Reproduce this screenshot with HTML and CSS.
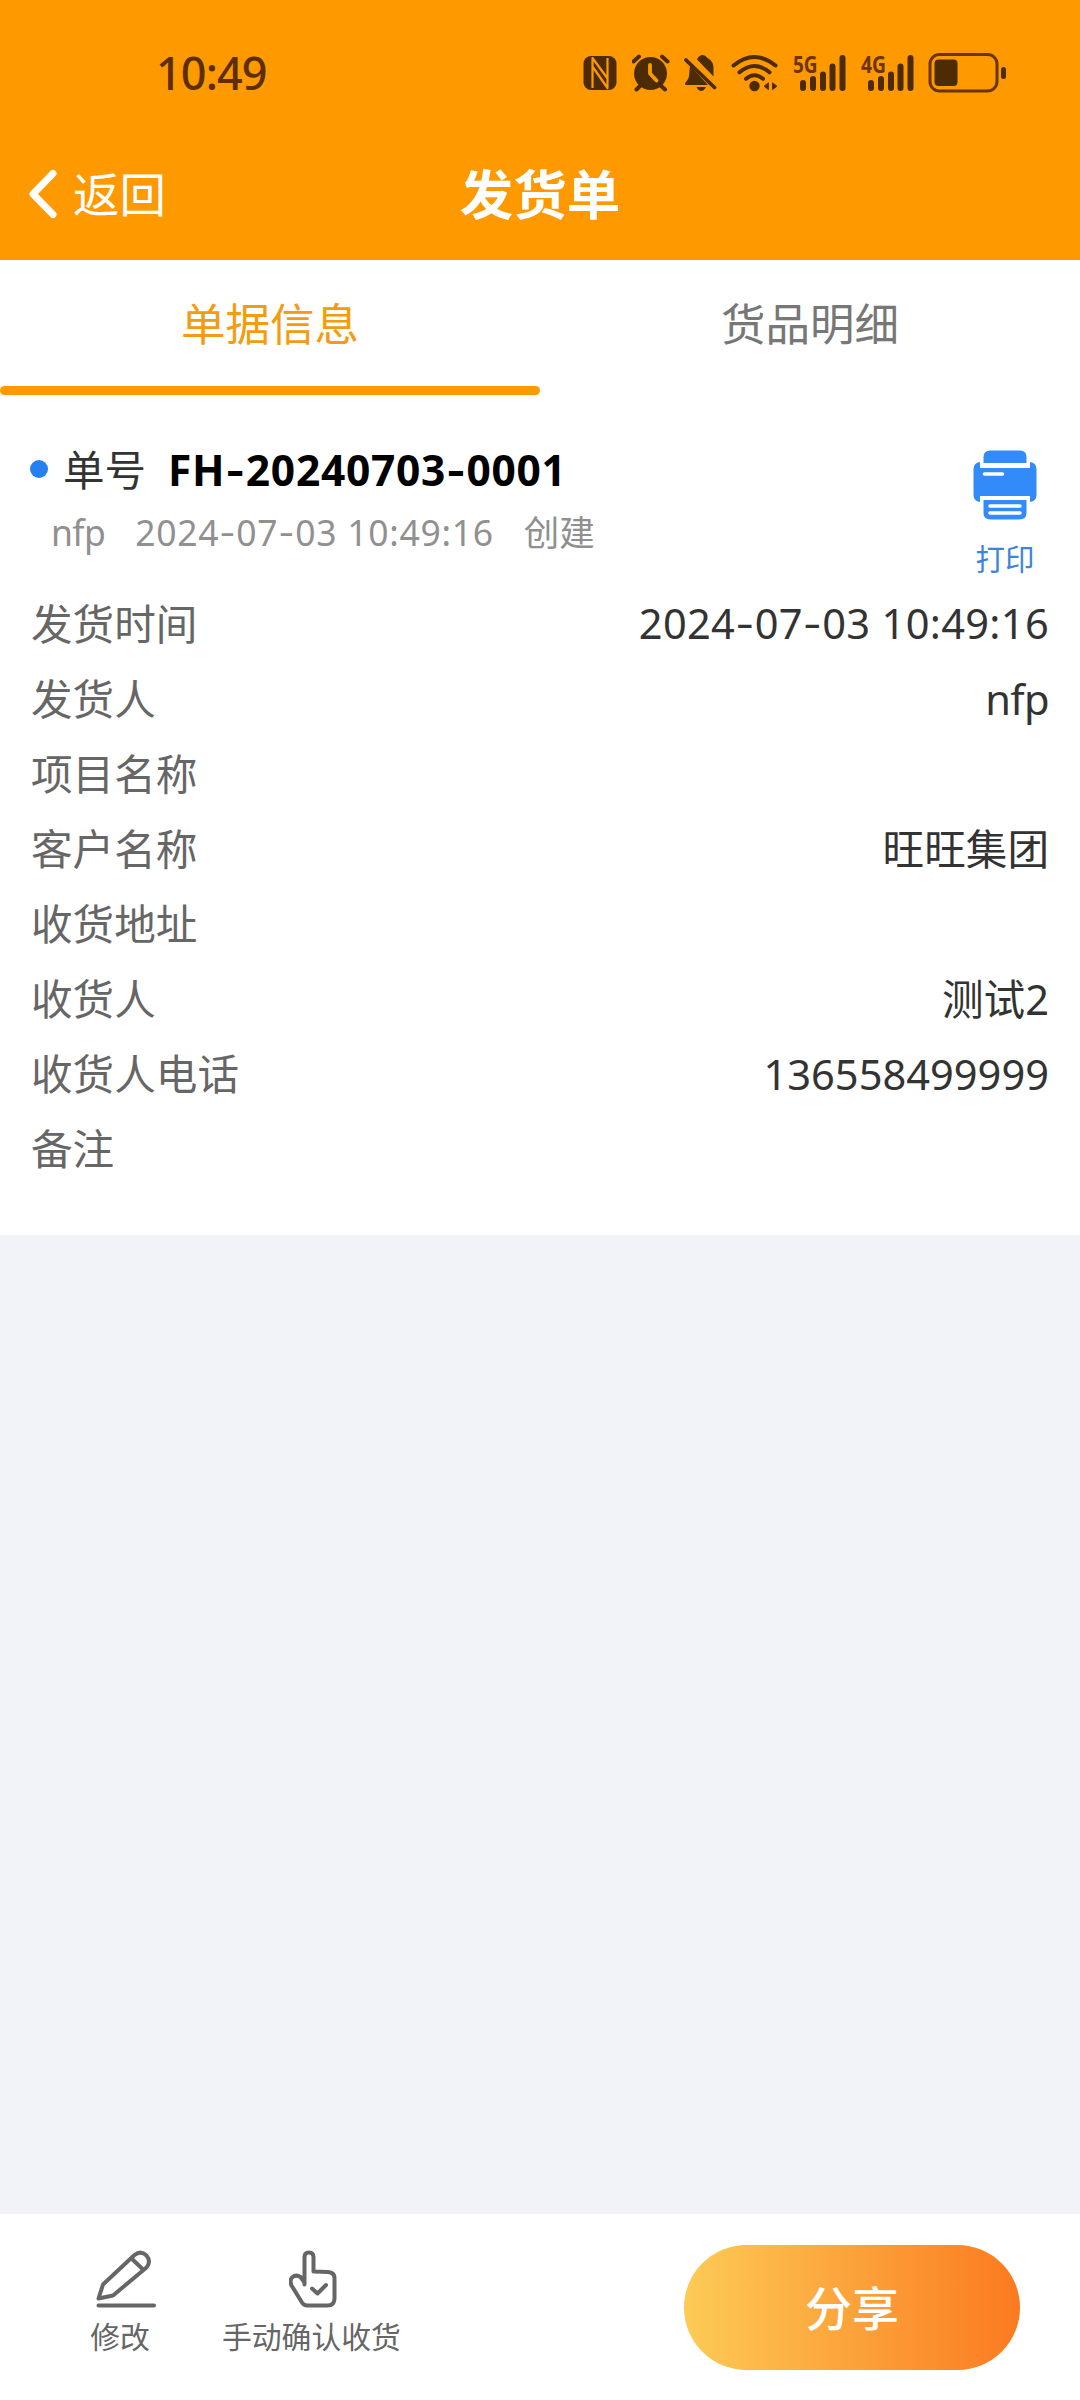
FILE: index.html
```html
<!DOCTYPE html>
<html lang="zh-CN">
<head>
<meta charset="utf-8">
<title>发货单</title>
<link rel="stylesheet" href="styles.css">
</head>
<body>
<div class="app">
  <header class="header">
    <div class="status">
      <span class="clock">10:49</span>
      <div class="status-icons">
        <svg class="nfc" width="34" height="36" viewBox="583 55 34 36">
          <rect x="583.5" y="56" width="33" height="34" rx="7.5" fill="#4d2c05"/>
          <path d="M592.500 88V58L607.500 78.500M592.500 66.500L607.500 88V58" fill="none" stroke="#ff9900" stroke-width="2.200" stroke-linejoin="round"/>
        </svg>
        <svg class="alarm" width="38" height="38" viewBox="632 54 38 38">
          <circle cx="650.5" cy="73.500" r="16.500" fill="#4d2c05"/>
          <path d="M633.500 61.500l5.500-5M662 56.500l5.500 5M641 85l-4.500 4.500M660 85l5 4.500" stroke="#4d2c05" stroke-width="4" stroke-linecap="round"/>
          <path d="M650 65v8.500l6.500 7" fill="none" stroke="#ff9900" stroke-width="3.800" stroke-linecap="round" stroke-linejoin="round"/>
        </svg>
        <svg class="bell" width="34" height="38" viewBox="684 54 34 38">
          <path d="M697 59.500q1.500-4 5-4.500 3-.4 5.500 3 6 3 6 10v8.500zM690 65.500L708 85H685.500q-1.500-1.500.5-3 2.500-2.500 3-6z" fill="#4d2c05"/>
          <path d="M686 60l28.500 27.500" stroke="#4d2c05" stroke-width="3.800" stroke-linecap="round"/>
          <path d="M696.500 87h9.500q-2 4-4.800 4t-4.700-4z" fill="#4d2c05"/>
        </svg>
        <svg class="wifi" width="48" height="38" viewBox="731 54 48 38">
          <path d="M733.500 65.500q21-17 42 0M739.500 72.300q15-12.500 30 0M746 78.800q8.500-7 17 0" fill="none" stroke="#4d2c05" stroke-width="4" stroke-linecap="round"/>
          <circle cx="754.500" cy="86" r="5.200" fill="#4d2c05"/>
          <path d="M764 86.200l4.500-3.500v7zM777 86.200l-4.500-3.500v7z" fill="#4d2c05" stroke="#4d2c05" stroke-width=".8"/>
        </svg>
        <svg class="signal" width="55" height="58" viewBox="792 44 55 58">
          <text class="net" x="793" y="72.500" textLength="24.500" lengthAdjust="spacingAndGlyphs">5G</text>
          <path d="M803 83v5M813 79v9M823 74.500V88M832.500 66.500V88M842.500 58V88" stroke="#4d2c05" stroke-width="6" stroke-linecap="round"/>
        </svg>
        <svg class="signal" width="55" height="58" viewBox="792 44 55 58">
          <text class="net" x="793" y="72.500" textLength="25" lengthAdjust="spacingAndGlyphs">4G</text>
          <path d="M803 83v5M813 79v9M823 74.500V88M832.500 66.500V88M842.500 58V88" stroke="#4d2c05" stroke-width="6" stroke-linecap="round"/>
        </svg>
        <svg class="battery" width="79" height="40" viewBox="928 53 79 40">
          <rect x="930" y="54.500" width="67" height="36.500" rx="9.500" fill="none" stroke="#6b3400" stroke-width="3"/>
          <rect x="934.500" y="59.500" width="23" height="26.500" rx="4" fill="#4d2c05"/>
          <rect x="1001" y="67" width="5" height="12" rx="2.500" fill="#4d2c05"/>
        </svg>
      </div>
    </div>
    <nav class="navbar">
      <a class="back">
        <svg width="28" height="50" viewBox="0 0 28 50"><path d="M24 4.500L4 25l20 20.500" fill="none" stroke="#fff" stroke-width="7" stroke-linecap="round" stroke-linejoin="round"/></svg>
        <span>返回</span>
      </a>
      <h1 class="title">发货单</h1>
    </nav>
  </header>

  <div class="tabs">
    <div class="tab active">单据信息</div>
    <div class="tab">货品明细</div>
  </div>

  <main class="card">
    <section class="order">
      <div class="order-main">
        <div class="order-no"><i class="dot"></i><span class="order-label">单号</span><b class="order-code">FH<span class="dash">-</span>20240703<span class="dash">-</span>0001</b></div>
        <div class="order-meta"><span class="who">nfp</span><span class="when">2024<span class="dash">-</span>07<span class="dash">-</span>03 10:49:16</span><span>创建</span></div>
      </div>
      <div class="print">
        <svg width="64" height="70" viewBox="0 0 64 70">
          <path d="M10.500 13V7q0-6.500 6.500-6.500h30Q53.500.5 53.500 7v6z" fill="#338bf9"/>
          <path d="M7 12Q.5 13 .5 19v26q0 6 6.500 7v-6h50v6q6.500-1 6.500-7V19q0-6-6.500-7v6H7z" fill="#338bf9"/>
          <path d="M10.500 50h43v12.500q0 7-7 7h-29q-7 0-7-7z" fill="#338bf9"/>
          <path d="M11.500 24H29.500M17 56h30M17 63h30" stroke="#fff" stroke-width="3.600" stroke-linecap="round"/>
        </svg>
        <span>打印</span>
      </div>
    </section>
    <dl class="fields">
      <div class="field"><dt>发货时间</dt><dd class="time">2024<span class="dash">-</span>07<span class="dash">-</span>03 10:49:16</dd></div>
      <div class="field"><dt>发货人</dt><dd class="who">nfp</dd></div>
      <div class="field"><dt>项目名称</dt><dd></dd></div>
      <div class="field"><dt>客户名称</dt><dd>旺旺集团</dd></div>
      <div class="field"><dt>收货地址</dt><dd></dd></div>
      <div class="field"><dt>收货人</dt><dd>测试2</dd></div>
      <div class="field"><dt>收货人电话</dt><dd>136558499999</dd></div>
      <div class="field"><dt>备注</dt><dd></dd></div>
    </dl>
  </main>

  <footer class="footer">
    <div class="action">
      <svg class="pencil" width="60" height="58" viewBox="96 2250.500 60 58">
        <path d="M98.500 2299l4.500-14L134.500 2255.500q6.500-5 12 .5 5 6 0 12L113 2296zM131.500 2259l10.500 10M98.500 2306H154" fill="none" stroke="#666" stroke-width="4" stroke-linecap="round" stroke-linejoin="round"/>
      </svg>
      <span>修改</span>
    </div>
    <div class="action">
      <svg class="hand" width="48" height="58" viewBox="288 2250.500 48 58">
        <path d="M303.500 2285V2257.500q0-4.500 4.500-4.500t4.500 4.500v14.500l14.500.5q6.500.5 6.500 6V2299q0 7-7 7H306q-3 0-5-3l-10.500-17q-2-5 .5-8 4-3.500 8.500-.5l4 5.500M311 2289l5.500 5 8.500-8.500" fill="none" stroke="#666" stroke-width="4" stroke-linecap="round" stroke-linejoin="round"/>
      </svg>
      <span>手动确认收货</span>
    </div>
    <button class="share">分享</button>
  </footer>
</div>
</body>
</html>
```
FILE: styles.css
```css
* {
  box-sizing: border-box;
}

body {
  margin: 0;
  background: #f1f3f8;
  font-family: "Noto Sans", "Noto Sans CJK SC", sans-serif;
  color: #333;
}

svg {
  display: block;
  flex: none;
}

.app {
  width: 1080px;
  height: 2400px;
  display: flex;
  flex-direction: column;
}

.header {
  height: 260px;
  background: #ff9900;
}

.status {
  height: 130px;
  padding: 16px 73px 0 156px;
  display: flex;
  align-items: center;
  justify-content: space-between;
}

.clock {
  font-size: 45px;
  font-weight: 500;
  line-height: 60px;
  letter-spacing: -0.9px;
  color: #5c2e00;
}

.status-icons {
  display: flex;
  align-items: center;
  gap: 13px;
}

.alarm {
  margin-left: 2px;
}

.bell {
  margin-left: 1px;
}

.net {
  font: 700 23px "Noto Sans", sans-serif;
  fill: #6b3400;
}

.navbar {
  height: 128px;
  padding: 0 29px;
  display: grid;
  grid-template-columns: 1fr auto 1fr;
  align-items: center;
}

.back {
  display: flex;
  align-items: center;
  gap: 16px;
  color: #fff;
  font-size: 46.5px;
  line-height: 60px;
}

.title {
  margin: 2px 0 0;
  color: #fff;
  font-size: 53.5px;
  line-height: 60px;
  font-weight: 700;
}

.tabs {
  height: 135px;
  display: flex;
  background: #fff;
}

.tab {
  flex: 1;
  display: flex;
  flex-direction: column;
  align-items: center;
  justify-content: space-between;
  padding-top: 34px;
  font-size: 44.5px;
  line-height: 60px;
  color: #777;
}

.tab.active {
  color: #f39c12;
}

.tab.active::after {
  content: "";
  width: 540px;
  height: 9px;
  border-radius: 5px;
  background: #ff9900;
}

.card {
  height: 840px;
  padding: 45px 31px 0;
  background: #fff;
}

.order {
  height: 146px;
  display: flex;
  justify-content: space-between;
}

.order-no {
  height: 60px;
  display: flex;
  align-items: center;
  line-height: 60px;
  font-size: 41.5px;
}

.dot {
  width: 18px;
  height: 18px;
  margin: 0 15px 3px -1px;
  border-radius: 50%;
  background: #2482f0;
}

.order-label {
  margin-right: 22px;
}

.order-code {
  color: #000;
  font-size: 42.5px;
  letter-spacing: 0.7px;
}

.dash {
  font-family: Inter, sans-serif;
}

.order-meta {
  height: 60px;
  padding: 2px 0 0 20px;
  display: flex;
  gap: 30px;
  font-size: 35.5px;
  line-height: 60px;
  color: #909090;
}

.who {
  letter-spacing: -0.6px;
}

.when {
  letter-spacing: 0.7px;
}

.print {
  width: 68px;
  padding-top: 10px;
  margin-right: 10px;
  display: flex;
  flex-direction: column;
  align-items: center;
  gap: 19px;
  font-size: 29.5px;
  line-height: 40px;
  color: #3d85d9;
}

.fields {
  margin: 0;
}

.field {
  height: 75px;
  display: flex;
  justify-content: space-between;
  align-items: center;
  font-size: 41.6px;
  line-height: 60px;
}

.field dt {
  color: #666;
}

.field dd {
  margin: 0;
  color: #333;
}

.field .time {
  letter-spacing: 0.3px;
}

.footer {
  height: 186px;
  margin-top: auto;
  padding: 31px 60px 0 90px;
  display: flex;
  align-items: flex-start;
  background: #fff;
}

.action {
  margin-right: 72px;
  padding-top: 5px;
  display: flex;
  flex-direction: column;
  align-items: center;
  gap: 9px;
  font-size: 29.8px;
  line-height: 40px;
  color: #666;
}

.action:first-child {
  width: 60px;
}

.pencil {
  margin-left: 12px;
}

.hand {
  margin-left: 3px;
}

.share {
  width: 336px;
  height: 125px;
  margin-left: auto;
  padding: 0;
  border: 0;
  border-radius: 63px;
  background: linear-gradient(90deg, #fdcb55, #fb7a20);
  color: #fff;
  font-family: inherit;
  font-size: 47px;
  font-weight: 500;
  line-height: 60px;
}
```
